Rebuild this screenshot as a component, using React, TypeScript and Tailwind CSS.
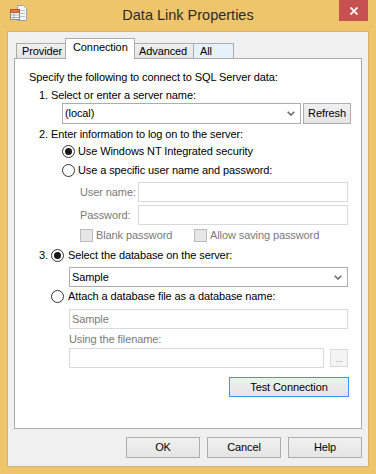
import React from "react";

// Data Link Properties — Win8 style dialog, Connection tab

const Radio = ({ checked }: { checked?: boolean }) => (
  <span className="flex h-[13px] w-[13px] shrink-0 items-center justify-center rounded-full border border-[#333333] bg-white">
    {checked && <span className="h-[7px] w-[7px] rounded-full bg-[#1a1a1a]" />}
  </span>
);

const DisabledCheck = () => (
  <span className="h-[13px] w-[13px] shrink-0 border border-[#bcbcbc] bg-[#e6e6e6]" />
);

const Btn = ({ children, className = "" }: { children: React.ReactNode; className?: string }) => (
  <button
    className={`flex shrink-0 items-center justify-center border bg-linear-to-b from-[#f0f0f0] to-[#e5e5e5] text-black ${className}`}
  >
    {children}
  </button>
);

const Chevron = () => (
  <svg width="8" height="5" viewBox="0 0 8 5" className="shrink-0">
    <path d="M0.7 0.7 L4 4 L7.3 0.7" fill="none" stroke="#6b6b6b" strokeWidth="1.6" />
  </svg>
);

const Tab = ({ children, className = "" }: { children: React.ReactNode; className?: string }) => (
  <div className={`-ml-px flex border border-b-0 border-[#acacac] ${className}`}>{children}</div>
);

export default function App() {
  return (
    <div className="flex h-[474px] w-[376px] flex-col bg-[#efc56b] font-['Liberation_Sans',Arial,sans-serif] text-[11px] leading-[15px] tracking-[-0.1px] text-black">
      {/* 标题栏 */}
      <div className="relative flex h-[31px] shrink-0 items-center justify-center">
        <svg className="absolute left-[9px] top-[5px]" width="18" height="16" viewBox="0 0 18 16">
          <path d="M8.5 0.5 H14.5 L17.5 3.5 V15.5 H8.5 Z" fill="#f7f7f7" stroke="#9aa3ad" />
          <path d="M10 5.5 H16 M10 8.5 H16 M10 11.5 H16" stroke="#b8c0c8" />
          <rect x="1.5" y="4.5" width="9" height="10" fill="#ffffff" stroke="#8a8f96" />
          <rect x="1.5" y="4.5" width="9" height="3" fill="#e37b3d" stroke="#b9582a" />
          <path d="M2 10 H10 M2 12.5 H10 M5 7.5 V14.5" stroke="#a6abb1" />
        </svg>
        <span className="text-[14.5px] leading-[17px] tracking-normal text-[#2b2b2b]">Data Link Properties</span>
        <div className="absolute right-[8px] top-0 flex h-[21px] w-[29px] items-center justify-center bg-[#c75050]">
          <svg width="8" height="8" viewBox="0 0 8 8">
            <path d="M0.5 0.5 L7.5 7.5 M7.5 0.5 L0.5 7.5" stroke="#ffffff" strokeWidth="1.8" />
          </svg>
        </div>
      </div>

      {/* 客户区 */}
      <div className="mx-[7px] mb-[7px] flex flex-1 flex-col border border-[#d4b46c] bg-[#f0f0f0]">
        {/* 选项卡 */}
        <div className="ml-[9px] mt-[6px] flex h-[20px] items-end">
          <Tab className="h-[15px] w-[50px] items-center bg-linear-to-b from-[#f0f0f0] to-[#e5e5e5] pl-[5px]">Provider</Tab>
          <Tab className="relative z-10 -mb-px h-[21px] w-[70px] items-start bg-white pl-[7px] pt-[1px]">Connection</Tab>
          <Tab className="h-[15px] w-[60px] items-center bg-linear-to-b from-[#f0f0f0] to-[#e5e5e5] pl-[4px]">Advanced</Tab>
          <Tab className="relative z-[5] h-[15px] w-[41px] items-center border-[#7eb4ea] bg-[#e5f1fb] pl-[6px]">All</Tab>
        </div>

        {/* 面板 */}
        <div className="mx-[6px] h-[371px] border border-[#acacac] bg-white pt-[11px]">
          <div className="ml-[14px] h-[15px]">Specify the following to connect to SQL Server data:</div>
          <div className="ml-[24px] mt-[3px] h-[15px]">1. Select or enter a server name:</div>
          <div className="ml-[47px] flex h-[21px] gap-[2px]">
            <div className="flex w-[239px] items-center justify-between border border-[#abadb3] bg-white pl-[2px] pr-[5px]">
              <span>(local)</span>
              <Chevron />
            </div>
            <Btn className="w-[48px] border-[#adadad]">Refresh</Btn>
          </div>
          <div className="ml-[24px] mt-[3px] h-[15px]">2. Enter information to log on to the server:</div>
          <div className="ml-[47px] flex h-[19px] items-center gap-[3px]">
            <Radio checked />
            <span>Use Windows NT Integrated security</span>
          </div>
          <div className="ml-[47px] flex h-[19px] items-center gap-[3px]">
            <Radio />
            <span>Use a specific user name and password:</span>
          </div>
          <div className="ml-[65px] mt-[2px] flex h-[20px] items-center text-[#7a7a7a]">
            <span className="w-[58px]">User name:</span>
            <div className="h-[20px] w-[210px] border border-[#d9d9d9] bg-white" />
          </div>
          <div className="ml-[65px] mt-[3px] flex h-[20px] items-center text-[#7a7a7a]">
            <span className="w-[58px]">Password:</span>
            <div className="h-[20px] w-[210px] border border-[#d9d9d9] bg-white" />
          </div>
          <div className="ml-[65px] mt-[1px] flex h-[18px] items-center text-[#7a7a7a]">
            <div className="flex w-[114px] items-center gap-[3px]">
              <DisabledCheck />
              <span>Blank password</span>
            </div>
            <div className="flex items-center gap-[3px]">
              <DisabledCheck />
              <span>Allow saving password</span>
            </div>
          </div>
          <div className="ml-[24px] mt-[2px] flex h-[19px] items-center">
            <span className="w-[12px]">3.</span>
            <Radio checked />
            <span className="ml-[4px]">Select the database on the server:</span>
          </div>
          <div className="ml-[54px] mt-[2px] flex h-[20px] w-[279px] items-center justify-between border border-[#abadb3] bg-white pl-[2px] pr-[5px]">
            <span>Sample</span>
            <Chevron />
          </div>
          <div className="ml-[36px] flex h-[19px] items-center">
            <Radio />
            <span className="ml-[4px]">Attach a database file as a database name:</span>
          </div>
          <div className="ml-[54px] mt-[3px] flex h-[20px] w-[279px] items-center border border-[#d9d9d9] bg-white pl-[2px] text-[#7a7a7a]">
            Sample
          </div>
          <div className="ml-[54px] mt-[3px] h-[15px] text-[#7a7a7a]">Using the filename:</div>
          <div className="ml-[54px] mt-[1px] flex h-[20px] items-center gap-[6px]">
            <div className="h-[20px] w-[255px] border border-[#d9d9d9] bg-white" />
            <div className="flex h-[18px] w-[18px] items-end justify-center border border-[#d9d9d9] bg-[#f4f4f4] pb-[2px] text-[9px] leading-[9px] text-[#9a9a9a]">
              ...
            </div>
          </div>
          <Btn className="ml-[214px] mt-[9px] h-[20px] w-[120px] border-[#3399ff]">Test Connection</Btn>
        </div>

        {/* 底部按钮 */}
        <div className="mt-[8px] flex justify-end gap-[7px] pr-[6px]">
          <Btn className="h-[21px] w-[74px] border-[#adadad]">OK</Btn>
          <Btn className="h-[21px] w-[74px] border-[#adadad]">Cancel</Btn>
          <Btn className="h-[21px] w-[74px] border-[#adadad]">Help</Btn>
        </div>
      </div>
    </div>
  );
}
